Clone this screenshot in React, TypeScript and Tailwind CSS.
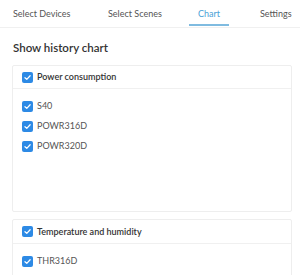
import React from "react";

function Check() {
  return (
    <span className="flex h-[11px] w-[11px] shrink-0 items-center justify-center rounded-[2px] bg-[#2d8ae5]">
      <svg width="9" height="9" viewBox="0 0 10 10" fill="none">
        <path d="M2.2 5.2 L4.2 7.1 L7.9 3.1" stroke="white" strokeWidth="1.4" strokeLinecap="round" strokeLinejoin="round" />
      </svg>
    </span>
  );
}

function Item({ label }: { label: string }) {
  return (
    <div className="flex h-[20px] items-center gap-[4px]">
      <Check />
      <span className="whitespace-nowrap text-[9px] text-[#555]">{label}</span>
    </div>
  );
}

export default function App() {
  return (
    <div className="h-[275px] w-[300px] overflow-hidden bg-white" style={{ fontFamily: 'Lato, "Noto Sans", sans-serif' }}>
      <div className="flex h-[28px] items-stretch border-b border-[#f0f0f0] bg-white">
        <div className="flex w-[95px] items-center whitespace-nowrap pl-[13px] text-[9px] text-[#555]">Select Devices</div>
        <div className="flex w-[81px] items-center whitespace-nowrap pl-[13px] text-[9px] text-[#555]">Select Scenes</div>
        <div className="relative flex w-[66px] items-center justify-center whitespace-nowrap text-[9px] text-[#4a9fd6]">
          Chart
          <div className="absolute bottom-[1px] left-[13px] h-[2px] w-[40px] bg-[#7fbbe0]" />
        </div>
        <div className="flex flex-1 items-center whitespace-nowrap pl-[18px] text-[9px] text-[#555]">Settings</div>
      </div>
      <div className="pl-[12px] pr-[8px]">
        <div className="pb-[8px] pl-[1px] pt-[10px] text-[11.5px] font-semibold leading-[19px] text-[#333]">Show history chart</div>
        <div className="flex h-[147px] flex-col rounded-[2px] border border-[#eeeeee]">
          <div className="flex h-[23px] items-center gap-[4px] border-b border-[#f0f0f0] pl-[9px]">
            <Check />
            <span className="whitespace-nowrap text-[9px] font-semibold text-[#333]">Power consumption</span>
          </div>
          <div className="flex flex-col pl-[9px] pt-[7px]">
            <Item label="S40" />
            <Item label="POWR316D" />
            <Item label="POWR320D" />
          </div>
        </div>
        <div className="mt-[7px] flex h-[80px] flex-col rounded-[2px] border border-[#eeeeee]">
          <div className="flex h-[24px] items-center gap-[4px] border-b border-[#f0f0f0] pl-[9px]">
            <Check />
            <span className="whitespace-nowrap text-[9px] font-semibold text-[#333]">Temperature and humidity</span>
          </div>
          <div className="flex flex-col pl-[9px] pt-[7px]">
            <Item label="THR316D" />
          </div>
        </div>
      </div>
    </div>
  );
}
